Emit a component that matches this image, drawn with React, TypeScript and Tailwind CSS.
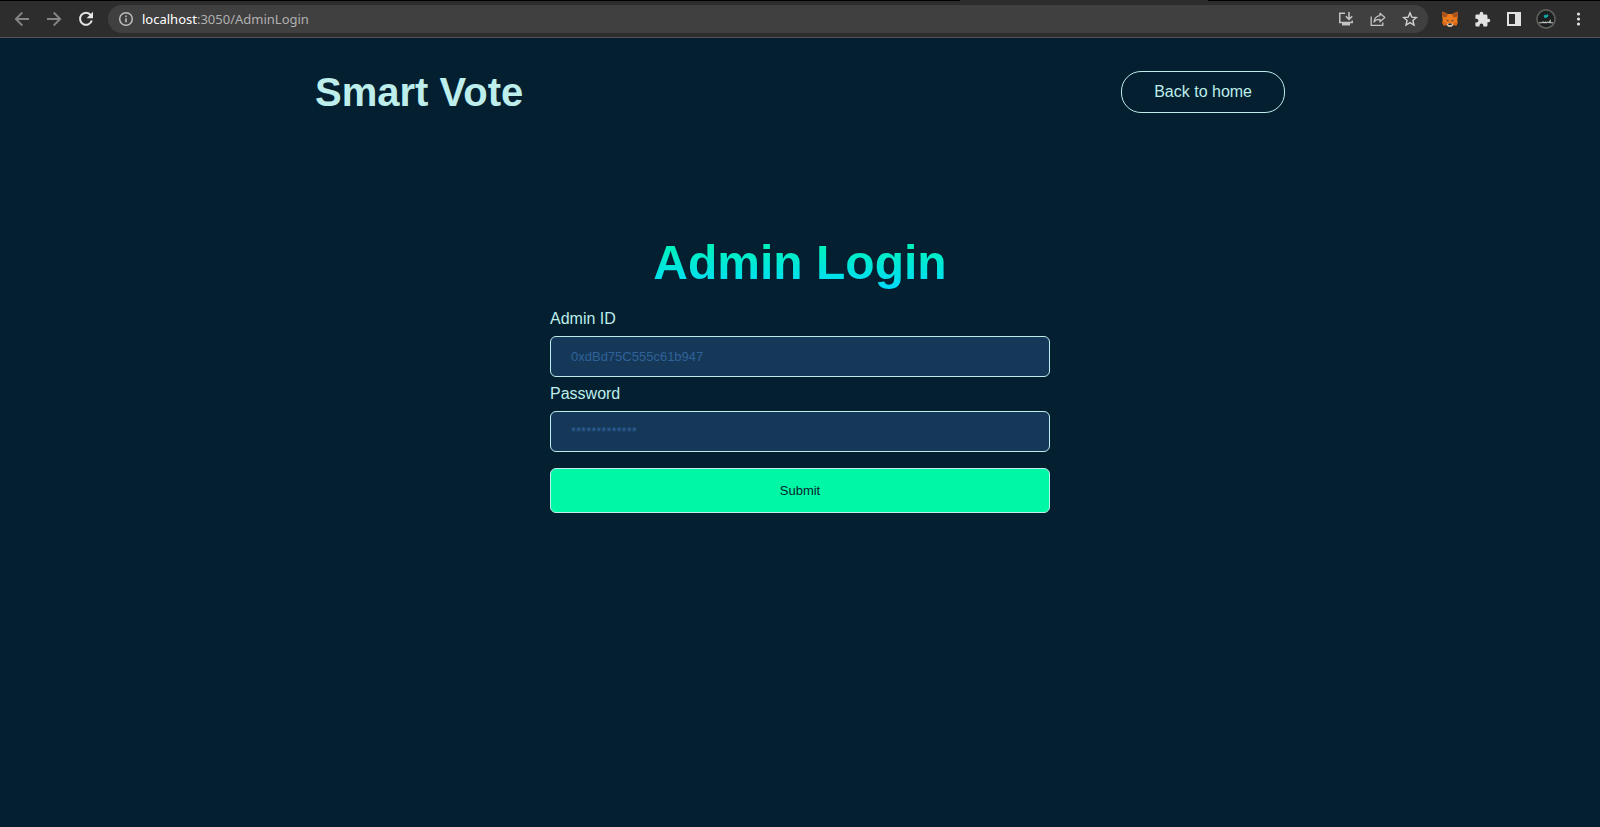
import type { ReactNode } from "react";

function ToolButton({ label, children, className = "" }: { label: string; children: ReactNode; className?: string }) {
  return (
    <button type="button" aria-label={label} className={`flex size-8 shrink-0 items-center justify-center ${className}`}>
      {children}
    </button>
  );
}

function FoxIcon() {
  return (
    <svg width="16" height="16" viewBox="0 0 16 16" aria-hidden="true">
      <path d="M.5.6 5.800 3h4.400L15.500.6 16 5l-.8 3.500.5 3-1.200 3-3-.5-2 1.700h-3L4.500 14l-3 .5-1.200-3 .5-3L0 5z" fill="#ee7a1e" />
      <path d="M.5.6 5.800 3.200 4.600 6.200 1.600 6.200 0 5zM15.500.6 10.200 3.200 11.400 6.200 14.400 6.200 16 5z" fill="#a8521c" />
      <path d="M.3 11.500 3.500 11l1 3-3 .5zM15.700 11.500 12.500 11l-1 3 3 .5z" fill="#d9651a" />
      <path d="M3.800 8.600 6.600 9.600 6.300 10.700zM12.200 8.600 9.400 9.600 9.700 10.700z" fill="#2b3442" />
      <path d="M4.500 14 6 12.200h4L11.500 14l-2 1.700h-3z" fill="#cfc3b6" />
      <path d="M6.500 12.600h3l.2 1.500H6.300z" fill="#20242b" />
    </svg>
  );
}

function AvatarIcon() {
  return (
    <svg width="20" height="20" viewBox="0 0 20 20" aria-hidden="true">
      <circle cx="10" cy="10" r="9.100" fill="#1c1f20" stroke="#5f605a" strokeWidth="1.600" />
      <path d="M8 8.600 7.700 6.800 9.300 5.600l.8 1L11.300 5l1.200 1.300-.8 1.800-2.200.9z" fill="#12a9a9" />
      <path d="M3 13.800h3l1-.8 1 .8 1.500-.6.8.6 1.500-.8 1.200.6 1.200-1.800v2H17" fill="none" stroke="#c4c6c0" strokeWidth="1.100" />
    </svg>
  );
}

function BrowserBar() {
  return (
    <div className="border-b border-[#545454] bg-[#2d2d2d] font-['Noto_Sans',sans-serif]">
      <div className="flex h-px justify-between">
        <span className="w-3/5 bg-black" />
        <span className="w-[392px] bg-black" />
      </div>
      <div className="flex h-9 items-center pl-1.5">
        <ToolButton label="Back" className="text-[#858585]">
          <svg width="16" height="16" viewBox="0 0 16 16" fill="none" stroke="currentColor" strokeWidth="1.8" aria-hidden="true">
            <path d="M15 8H2M8.300 1.500 1.800 8l6.500 6.500" />
          </svg>
        </ToolButton>
        <ToolButton label="Forward" className="text-[#858585]">
          <svg width="16" height="16" viewBox="0 0 16 16" fill="none" stroke="currentColor" strokeWidth="1.8" aria-hidden="true">
            <path d="M1 8h13M7.700 1.500 14.200 8l-6.500 6.500" />
          </svg>
        </ToolButton>
        <ToolButton label="Reload" className="text-[#e6e6e6]">
          <svg width="16" height="16" viewBox="0 0 16 16" aria-hidden="true">
            <path d="M12.700 4A6 6 0 1 0 13.800 9.500" fill="none" stroke="currentColor" strokeWidth="2" />
            <path d="M15 .8v6.400H8.600z" fill="currentColor" />
          </svg>
        </ToolButton>
        <div className="ml-1.5 flex h-7 min-w-0 flex-1 items-center rounded-full bg-[#404040] pr-0.5 pl-2.5">
          <svg width="16" height="16" viewBox="0 0 16 16" fill="none" stroke="#bdbdbd" strokeWidth="1.500" className="shrink-0" aria-hidden="true">
            <circle cx="8" cy="8" r="6.300" />
            <path d="M8 7.200v4M8 4.500V6" strokeWidth="1.600" />
          </svg>
          <div className="min-w-0 flex-1 truncate pl-2 text-[13px] leading-5 text-[#b0b0b0]">
            <span className="text-white">localhost</span>:3050/AdminLogin
          </div>
          <ToolButton label="Install app" className="text-[#c4c4c4]">
            <svg width="16" height="16" viewBox="0 0 16 16" fill="none" stroke="currentColor" strokeWidth="1.500" aria-hidden="true">
              <path d="M7 2.200H1.800v9.300h12.400V9.500M11 1v7M7.800 5.200 11 8.400l3.200-3.200" />
              <path d="M4 13.200h8" strokeWidth="2.500" />
            </svg>
          </ToolButton>
          <ToolButton label="Share" className="text-[#c4c4c4]">
            <svg width="16" height="16" viewBox="0 0 16 16" fill="none" stroke="currentColor" strokeWidth="1.300" aria-hidden="true">
              <path d="M1.200 5.500v8.800h11.600V11.500" />
              <path d="M10 2.300 14.800 6.500 10 10.700V8.300C7 8.200 5.200 9.200 4 11c.4-3.500 2.500-5.800 6-6.300z" strokeLinejoin="round" />
            </svg>
          </ToolButton>
          <ToolButton label="Bookmark this page" className="text-[#d0d0d0]">
            <svg width="16" height="16" viewBox="0 0 16 16" fill="none" stroke="currentColor" strokeWidth="1.400" aria-hidden="true">
              <path d="m8 1.900 1.800 4.200 4.600.4-3.500 3 1.100 4.500-4-2.400L4 14l1.100-4.500-3.500-3 4.600-.4z" />
            </svg>
          </ToolButton>
        </div>
        <div className="flex shrink-0 items-center px-1.5">
          <ToolButton label="Wallet extension"><FoxIcon /></ToolButton>
          <ToolButton label="Extensions" className="text-[#e2e2e2]">
            <svg width="17" height="17" viewBox="0 0 24 24" fill="currentColor" aria-hidden="true">
              <path d="M20.500 11H19V7c0-1.100-.9-2-2-2h-4V3.500a2.500 2.500 0 0 0-5 0V5H4c-1.100 0-2 .9-2 2v3.800h1.500a2.700 2.700 0 0 1 0 5.400H2V20c0 1.100.9 2 2 2h3.800v-1.500a2.700 2.700 0 0 1 5.400 0V22H17c1.100 0 2-.9 2-2v-4h1.500a2.500 2.500 0 0 0 0-5z" />
            </svg>
          </ToolButton>
          <ToolButton label="Side panel" className="text-[#e2e2e2]">
            <svg width="16" height="16" viewBox="0 0 16 16" aria-hidden="true">
              <path d="M1 1h14v14H1zM3 3v10h6V3z" fill="currentColor" fillRule="evenodd" />
            </svg>
          </ToolButton>
          <ToolButton label="Profile"><AvatarIcon /></ToolButton>
          <ToolButton label="Menu" className="text-[#e2e2e2]">
            <svg width="16" height="16" viewBox="0 0 16 16" fill="currentColor" aria-hidden="true">
              <circle cx="8.500" cy="3" r="1.600" />
              <circle cx="8.500" cy="8" r="1.600" />
              <circle cx="8.500" cy="13" r="1.600" />
            </svg>
          </ToolButton>
        </div>
      </div>
    </div>
  );
}

const fieldClass =
  "block h-[41px] w-full rounded-md border border-[#bdeeeb] bg-[#163858] px-5 text-[13px] text-[#bdeeeb] outline-none placeholder:text-[#2e6299]";

export default function App() {
  return (
    <div className="flex min-h-screen flex-col bg-[#031f30] font-['Liberation_Sans',Arial,sans-serif] text-[#bdeeeb]">
      <BrowserBar />
      <header className="mx-auto flex w-full max-w-[970px] items-center justify-between pt-8">
        <div className="text-[40px] leading-11 font-bold">Smart Vote</div>
        <a href="/" className="rounded-[20px] border border-[#bdeeeb] px-8 py-2.5 text-base leading-5">
          Back to home
        </a>
      </header>
      <main className="mx-auto w-full max-w-[500px] pt-30">
        <h1 className="bg-linear-to-b from-[#00f7a5] to-[#00d8ff] bg-clip-text text-center text-5xl leading-[58px] font-bold text-transparent">
          Admin Login
        </h1>
        <form className="pt-4" onSubmit={(event) => event.preventDefault()}>
          <label htmlFor="admin-id" className="block pb-1.5 text-base leading-[22px]">Admin ID</label>
          <input id="admin-id" type="text" placeholder="0xdBd75C555c61b947" className={fieldClass} />
          <label htmlFor="password" className="block py-1.5 text-base leading-[22px]">Password</label>
          <input id="password" type="password" placeholder="*************" className={fieldClass} />
          <button type="submit" className="mt-4 block h-[45px] w-full rounded-md border border-[#bdeeeb] bg-[#00f7a5] text-[13px] text-[#031f30]">
            Submit
          </button>
        </form>
      </main>
    </div>
  );
}
